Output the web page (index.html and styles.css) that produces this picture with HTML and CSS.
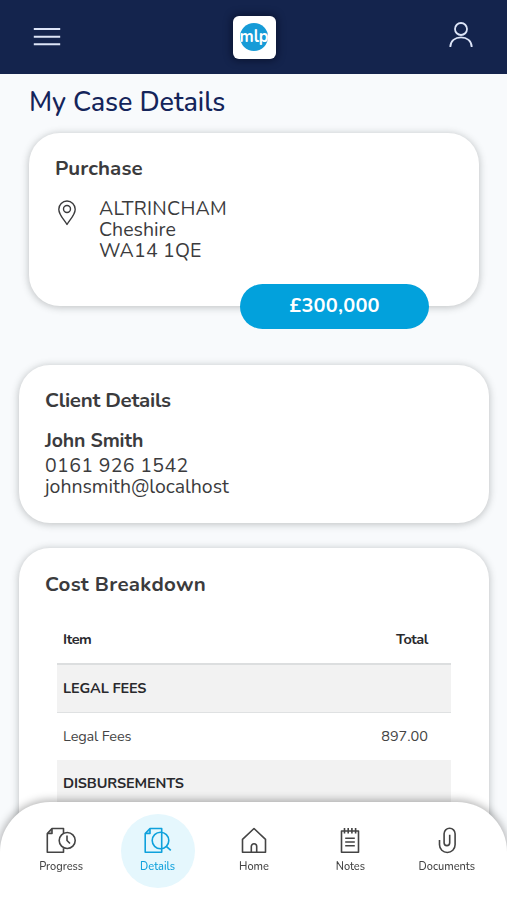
FILE: index.html
```html
<!DOCTYPE html>
<html lang="en">
<head>
<meta charset="utf-8">
<meta name="viewport" content="width=device-width, initial-scale=1">
<title>My Case Details</title>
<link rel="stylesheet" href="styles.css">
</head>
<body>
<header class="topbar">
  <svg class="menu" viewBox="0 0 28 20"><path d="M.8 2h26.4M.8 9.700h26.4M.8 17.300h26.400"/></svg>
  <div class="logo">
    <svg viewBox="0 0 28 28"><circle cx="14" cy="14" r="14" fill="#169bd7"/><text x="-.5" y="18.500" textLength="29" lengthAdjust="spacingAndGlyphs">mlp</text></svg>
  </div>
  <svg class="user" viewBox="0 0 24 26"><circle cx="12" cy="7" r="6"/><path d="M1.300 25c0-6 4.800-9.700 10.700-9.700S22.700 19 22.700 25"/></svg>
</header>
<main class="page">
  <h1 class="title">My Case Details</h1>
  <section class="card purchase">
    <h2 class="heading h-purchase">Purchase</h2>
    <div class="place">
      <svg class="pin" viewBox="0 0 18 26"><path d="M9 24.500C6.500 20 .8 15 .8 9.200a8.200 8.200 0 0 1 16.400 0C17.200 15 11.500 20 9 24.500Z"/><circle cx="9" cy="9" r="3.500"/></svg>
      <address class="lines"><span class="l-town">ALTRINCHAM</span><span>Cheshire</span><span class="l-post">WA14 1QE</span></address>
    </div>
    <div class="price">£300,000</div>
  </section>
  <section class="card client">
    <h2 class="heading h-client">Client Details</h2>
    <div class="name">John Smith</div>
    <div class="lines"><span class="l-phone">0161 926 1542</span><span class="l-mail">johnsmith@localhost</span></div>
  </section>
  <section class="card costs">
    <h2 class="heading h-costs">Cost Breakdown</h2>
    <div class="table">
      <div class="row head"><span>Item</span><span>Total</span></div>
      <div class="row group"><span>LEGAL FEES</span></div>
      <div class="row"><span class="t-fees">Legal Fees</span><span>897.00</span></div>
      <div class="row group"><span>DISBURSEMENTS</span></div>
    </div>
  </section>
</main>
<nav class="tabs">
  <a class="tab">
    <svg viewBox="0 0 30 28"><path d="M17.500 7V1.500H6L1.300 6.500v18.700h16.200v-4M6 1.500v5H1.300"/><path class="fold" d="M6 1.500v5H1.300Z"/><circle cx="21.200" cy="13.500" r="8"/><path d="M21 8.500v5l3 3"/></svg>
    <span>Progress</span>
  </a>
  <a class="tab active">
    <svg viewBox="0 0 30 28"><path d="M18.700 5V1.500H7L2.200 6.500v18.700h16.500V5M7 1.500v5H2.200"/><path class="fold" d="M7 1.500v5H2.200Z"/><circle cx="17.500" cy="13.500" r="8.300"/><path d="m23.300 19.400 4.500 4"/></svg>
    <span>Details</span>
  </a>
  <a class="tab">
    <svg viewBox="0 0 30 28"><path d="M3.500 12.300 15 1.500l11.500 10.800v12.900h-23ZM12.300 25v-5.500a2.700 2.700 0 0 1 5.400 0V25"/></svg>
    <span>Home</span>
  </a>
  <a class="tab">
    <svg viewBox="0 0 30 28"><path d="M6.500 4h17v21.200h-17ZM9.500 1v5.500M13.200 1v5.500M16.900 1v5.500M20.600 1v5.500M10.200 11.300h9.600M10.200 15h9.600M10.200 18.700h9.600"/></svg>
    <span>Notes</span>
  </a>
  <a class="tab">
    <svg viewBox="0 0 30 28"><path d="M7.500 13v4.800a7.800 7.700 0 0 0 15.600 0V6.800a5.500 5.500 0 0 0-11 0v9a2.800 2.800 0 0 0 5.600 0V7.700"/></svg>
    <span>Documents</span>
  </a>
</nav>
</body>
</html>
```
FILE: styles.css
```css
* { box-sizing: border-box; }
body {
  margin: 0;
  height: 900px;
  overflow: hidden;
  background: #f8fafc;
  color: #3b3b3d;
  font-family: Nunito, Lato, "Open Sans", sans-serif;
}
svg { display: block; fill: none; stroke: currentColor; stroke-width: 1.6; stroke-linejoin: round; }
.topbar {
  height: 74px;
  padding: 0 32px 0 33px;
  display: grid;
  grid-template-columns: 1fr 43px 1fr;
  align-items: center;
  background: #14244d;
  color: #dde5f8;
}
.menu { width: 28px; height: 20px; margin-top: -1px; stroke-width: 2; }
.logo {
  width: 43px;
  height: 43px;
  padding: 7.5px;
  border-radius: 6px;
  background: #fff;
  box-shadow: 0 0 7px 2px rgba(3, 8, 28, .5);
}
.logo svg { width: 28px; height: 28px; stroke: none; overflow: visible; }
.logo text { fill: #fff; font: 700 18px Nunito, Lato, sans-serif; }
.user { width: 24px; height: 26px; justify-self: end; margin: -5px 2px 0 0; stroke-width: 1.8; }
.page { padding: 10px 18px 0 19px; }
.title {
  margin: 0 0 13px 10px;
  font-size: 27px;
  line-height: 38px;
  height: 36px;
  font-weight: 500;
  color: #14245a;
  letter-spacing: -.05px;
}
.card {
  position: relative;
  border-radius: 31px;
  padding: 23px 26px;
  background: #fff;
  box-shadow: 0 1px 7px 1px rgba(60, 66, 66, .27);
}
.purchase { height: 173px; margin: 0 10px 59px; }
.client { height: 158px; margin-bottom: 25px; }
.costs { height: 352px; }
.heading { margin: 0; font-size: 20.5px; line-height: 25px; height: 24px; font-weight: 700; }
.h-purchase { letter-spacing: .1px; }
.h-client { letter-spacing: -.28px; }
.h-costs { line-height: 27px; letter-spacing: .3px; }
.place { display: flex; margin-top: 18px; }
.pin { width: 18px; height: 26px; margin: 2px 23px 0 3px; stroke-width: 1.4; }
.lines { display: flex; flex-direction: column; font-style: normal; font-size: 19.5px; line-height: 21px; }
.l-town { letter-spacing: .25px; }
.l-post { letter-spacing: .2px; }
.l-phone { letter-spacing: .37px; }
.l-mail { letter-spacing: -.03px; }
.price {
  position: absolute;
  right: 50px;
  bottom: -23px;
  width: 189px;
  height: 45px;
  border-radius: 23px;
  background: #02a1dc;
  color: #fff;
  font-size: 20px;
  font-weight: 700;
  letter-spacing: .2px;
  line-height: 44px;
  text-align: center;
}
.name { margin: 17px 0 2px; font-size: 19.5px; font-weight: 700; line-height: 24px; letter-spacing: -.15px; }
.table { margin: 21px 12px 0; font-size: 14.5px; color: #444; }
.row { height: 47px; padding: 0 23px 1px 6px; display: flex; align-items: center; justify-content: space-between; }
.head { height: 49px; border-bottom: 2px solid #dcdedf; font-weight: 700; color: #29292d; letter-spacing: -.45px; }
.group { background: #f2f2f2; font-weight: 700; color: #29292d; letter-spacing: -.15px; }
.head + .group { height: 48px; border-bottom: 1px solid #dfe1e2; }
.t-fees { letter-spacing: -.15px; }
.tabs {
  position: fixed;
  left: 0;
  right: 0;
  bottom: 0;
  height: 98px;
  padding: 12px 12px 0 13px;
  display: flex;
  justify-content: space-between;
  border-radius: 50px 50px 0 0;
  background: #fff;
  box-shadow: 0 -1px 8px 1px rgba(0, 0, 0, .3);
}
.tab {
  width: 96.4px;
  display: flex;
  flex-direction: column;
  align-items: center;
  padding-top: 13px;
  font-size: 11px;
  font-weight: 500;
  line-height: 16px;
  color: #444;
}
.tab svg { width: 30px; height: 28px; margin-bottom: 4px; }
.fold { fill: currentColor; fill-opacity: .35; stroke: none; }
.active { width: 74px; height: 74px; margin: 0 11.2px; border-radius: 50%; background: #e5f7fd; color: #0fa1dc; }
```
